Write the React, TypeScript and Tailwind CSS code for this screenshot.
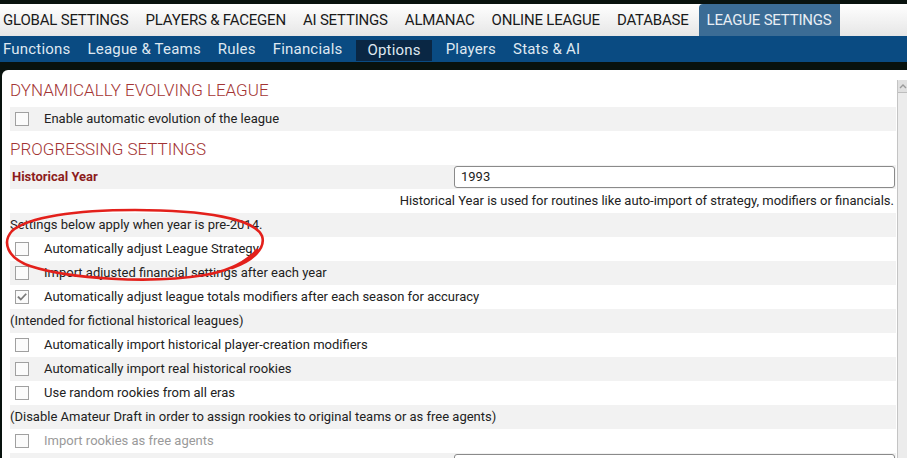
import React from 'react'

const TOP_TABS = ['GLOBAL SETTINGS', 'PLAYERS & FACEGEN', 'AI SETTINGS', 'ALMANAC', 'ONLINE LEAGUE', 'DATABASE']
const SUB_TABS = ['Functions', 'League & Teams', 'Rules', 'Financials', 'Options', 'Players', 'Stats & AI']

type Row =
  | { kind: 'check'; label: string; checked?: boolean; disabled?: boolean }
  | { kind: 'note'; label: string }

const ROWS: Row[] = [
  { kind: 'note', label: 'Settings below apply when year is pre-2014.' },
  { kind: 'check', label: 'Automatically adjust League Strategy' },
  { kind: 'check', label: 'Import adjusted financial settings after each year' },
  { kind: 'check', label: 'Automatically adjust league totals modifiers after each season for accuracy', checked: true },
  { kind: 'note', label: '(Intended for fictional historical leagues)' },
  { kind: 'check', label: 'Automatically import historical player-creation modifiers' },
  { kind: 'check', label: 'Automatically import real historical rookies' },
  { kind: 'check', label: 'Use random rookies from all eras' },
  { kind: 'note', label: '(Disable Amateur Draft in order to assign rookies to original teams or as free agents)' },
  { kind: 'check', label: 'Import rookies as free agents', disabled: true },
]

function Checkbox({ checked }: { checked?: boolean }) {
  return (
    <span className="w-[14px] h-[14px] border border-[#a0a0a0] bg-[#fbfbfb] flex items-center justify-center shrink-0">
      {checked && (
        <svg width="10" height="10" viewBox="0 0 10 10" fill="none">
          <path d="M1.5 5.2l2.3 2.3L8.6 2.4" stroke="#7a7a7a" strokeWidth="1.8" strokeLinecap="square" />
        </svg>
      )}
    </span>
  )
}

function Heading({ children }: { children: React.ReactNode }) {
  return (
    <div className="flex items-center pt-[4px] text-[17px] font-light text-[#a33434]">
      {children}
    </div>
  )
}

export default function App() {
  return (
    <div className="w-[907px] h-[458px] overflow-hidden bg-[#08120e] font-['Roboto',sans-serif] flex flex-col">
      {/* top tabs */}
      <div className="shrink-0 mt-[4px] h-[32px] bg-gradient-to-b from-[#ffffff] to-[#e6e6e6] flex items-stretch pl-[3px] gap-[17px] text-[15px] text-[#1a1a1a] tracking-[-0.2px]">
        {TOP_TABS.map((t) => (
          <div key={t} className="flex items-center whitespace-nowrap">{t}</div>
        ))}
        <div className="flex items-center whitespace-nowrap px-2 -ml-[7px] bg-[#3b6c95] text-[#e8eef4] rounded-tl-[4px]">
          LEAGUE SETTINGS
        </div>
      </div>

      {/* sub tabs */}
      <div className="shrink-0 h-[26px] bg-[#0a4b82] flex items-center pl-[3px] gap-[17px] text-[15px] text-[#dfe8f1] tracking-[0.2px]">
        {SUB_TABS.map((t) =>
          t === 'Options' ? (
            <div key={t} className="h-[21px] mt-[3px] flex items-center px-[11px] -mx-[3px] bg-[#0a2744] whitespace-nowrap">{t}</div>
          ) : (
            <div key={t} className="whitespace-nowrap">{t}</div>
          )
        )}
      </div>

      {/* content panel */}
      <div className="relative shrink-0 mt-[8px] ml-[2px] h-[388px] bg-white rounded-tl-[6px] flex text-[13px] text-[#222]">
        <div className="flex-1 pl-[8px] pr-[1px]">
          <div className="h-[37px] flex"><Heading>DYNAMICALLY EVOLVING LEAGUE</Heading></div>
          <div className="h-[24px] bg-[#f2f2f2] flex items-center pl-[5px] gap-[15px]">
            <Checkbox />
            <span>Enable automatic evolution of the league</span>
          </div>
          <div className="h-[34px] flex"><Heading>PROGRESSING SETTINGS</Heading></div>
          <div className="h-[24px] bg-[#f2f2f2] flex items-center pl-[2px] pr-[1px]">
            <span className="flex-1 font-bold text-[#8c1c1c]">Historical Year</span>
            <div className="w-[441px] h-[22px] border border-[#8a8a8a] rounded-[3px] bg-white flex items-center pl-[6px]">1993</div>
          </div>
          <div className="h-[24px] flex items-center justify-end pr-[2px]">
            Historical Year is used for routines like auto-import of strategy, modifiers or financials.
          </div>
          {ROWS.map((r, i) => (
            <div
              key={r.label}
              className={`h-[24px] flex items-center ${i % 2 === 0 ? 'bg-[#f2f2f2]' : 'bg-white'} ${
                r.kind === 'check' ? 'pl-[5px] gap-[15px]' : 'pl-[0px]'
              }`}
            >
              {r.kind === 'check' && <Checkbox checked={r.checked} />}
              <span className={r.kind === 'check' && r.disabled ? 'text-[#9a9a9a]' : ''}>{r.label}</span>
            </div>
          ))}
          <div className="h-[24px] bg-[#f2f2f2] flex items-start justify-end pr-[1px] pt-[1px]">
            <div className="w-[441px] h-[22px] border border-[#8a8a8a] rounded-[3px] bg-white" />
          </div>
        </div>

        {/* scrollbar */}
        <div className="w-[10px] mt-[10px] flex flex-col border-l border-[#c4c4c4] bg-[#ececec]">
          <div className="h-[13px] bg-[#e0e0e0] border-b border-[#bdbdbd] rounded-tl-[2px] flex items-center justify-center">
            <svg width="8" height="6" viewBox="0 0 8 6">
              <path d="M1 5l3-3 3 3" stroke="#9a9a9a" strokeWidth="1.4" fill="none" />
            </svg>
          </div>
        </div>

        {/* hand-drawn red circle */}
        <svg className="absolute left-[-2px] top-[-70px] pointer-events-none" width="907" height="458" viewBox="0 0 907 458" fill="none">
          <path
            d="M232 268 C253 261 266 248 262 236 C255 219 205 210 135 210 C75 210 28 217 12 231 C2 242 7 258 30 266 C70 279 150 284 205 275 C228 271 246 262 257 250"
            stroke="#e3201b"
            strokeWidth="2.6"
            strokeLinecap="round"
          />
        </svg>
      </div>
    </div>
  )
}
